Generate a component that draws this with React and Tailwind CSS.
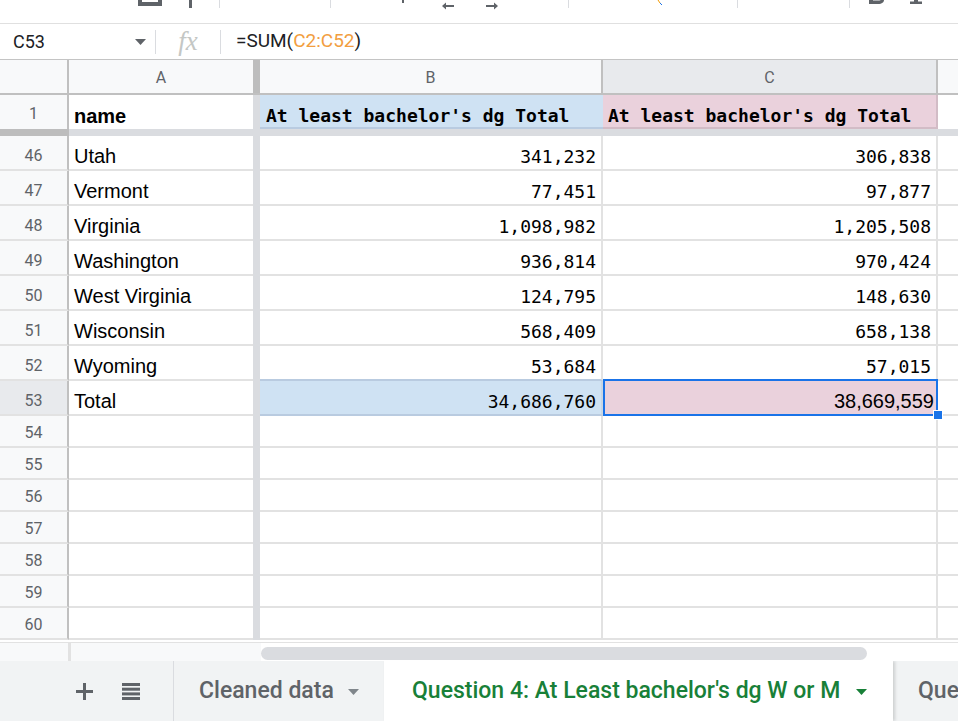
import React from 'react';

const rows = [
  [46, 'Utah', '341,232', '306,838'],
  [47, 'Vermont', '77,451', '97,877'],
  [48, 'Virginia', '1,098,982', '1,205,508'],
  [49, 'Washington', '936,814', '970,424'],
  [50, 'West Virginia', '124,795', '148,630'],
  [51, 'Wisconsin', '568,409', '658,138'],
  [52, 'Wyoming', '53,684', '57,015'],
];

const emptyRows = [54, 55, 56, 57, 58, 59, 60];

const sans = "font-['Liberation_Sans',Arial,sans-serif]";
const mono = "font-['DejaVu_Sans_Mono',monospace]";
const ui = "font-['Roboto',Arial,sans-serif]";

const Caret = ({ className = 'fill-[#5f6368]' }) => (
  <svg width="11" height="6" viewBox="0 0 11 6" className={className}>
    <path d="M0 0h11L5.5 6z" />
  </svg>
);

const Toolbar = () => (
  <div className="flex h-[23px] items-start bg-white">
    <svg width="24" height="8" viewBox="0 0 24 8" className="ml-[138px]">
      <path d="M0 0h4v2h16V0h4v6H0z" fill="#5f6368" />
    </svg>
    <div className="ml-[27px] h-[8px] w-[3px] bg-[#5f6368]" />
    <div className="ml-[27px] h-[8px] w-px bg-[#dadce0]" />
    <div className="ml-[110px] h-[8px] w-px bg-[#dadce0]" />
    <div className="ml-[71px] h-[3px] w-[2px] bg-[#5f6368]" />
    <svg width="12" height="8" viewBox="0 0 12 8" className="ml-[38px] mt-[2px]">
      <path d="M0 4l4-3.5v2.5h8v2H4v2.5z" fill="#5f6368" />
    </svg>
    <svg width="12" height="8" viewBox="0 0 12 8" className="ml-[32px] mt-[2px]">
      <path d="M12 4L8 .5V3H0v2h8v2.5z" fill="#5f6368" />
    </svg>
    <div className="ml-[70px] h-[8px] w-px bg-[#dadce0]" />
    <svg width="6" height="5" viewBox="0 0 6 5" className="ml-[88px]">
      <path d="M1 0l2 3" stroke="#f29900" strokeWidth="1" />
      <path d="M3 3l2 2" stroke="#1a73e8" strokeWidth="1" />
    </svg>
    <div className="ml-[74px] h-[8px] w-px bg-[#dadce0]" />
    <div className="ml-[111px] h-[8px] w-px bg-[#dadce0]" />
    <svg width="15" height="4" viewBox="0 0 15 4" className="ml-[19px]">
      <path d="M0 0h4v0.5h5C11 0.5 12 0 12 0h3c0 2-2 4-6 4H0z" fill="#5f6368" />
    </svg>
    <svg width="12" height="4" viewBox="0 0 12 4" className="ml-[26px]">
      <path d="M4 0h4v1.5h4V4H0V1.5h4z" fill="#5f6368" />
    </svg>
  </div>
);

const FormulaBar = () => (
  <div className={`flex h-[37px] items-center border-y border-t-[#e0e0e0] border-b-[#c4c4c4] bg-white ${ui}`}>
    <div className="flex w-[155px] items-center pl-[13px] pr-[9px]">
      <span className="text-[18px] text-[#202124]">C53</span>
      <span className="ml-auto">
        <Caret />
      </span>
    </div>
    <div className="h-[24px] w-px bg-[#dadce0]" />
    <div className="flex w-[64px] justify-center">
      <span className="font-['Liberation_Serif',serif] text-[27px] italic leading-none text-[#c4c7c5]">fx</span>
    </div>
    <div className="h-[24px] w-px bg-[#dadce0]" />
    <div className="pl-[15px] text-[19px] text-[#202124]">
      =SUM(<span className="text-[#f29e3f]">C2:C52</span>)
    </div>
  </div>
);

const HeaderRow = () => (
  <div className={`flex h-[35px] border-b-2 border-[#c0c0c0] text-[16px] text-[#5f6368] ${ui}`}>
    <div className="w-[69px] border-r-2 border-[#c0c0c0] bg-[#f8f9fa]" />
    <div className="flex w-[184px] items-center justify-center bg-[#f8f9fa] pt-[2px]">A</div>
    <div className="w-[7px] bg-[#bdbdbd]" />
    <div className="flex w-[343px] items-center justify-center border-r-2 border-[#c0c0c0] bg-[#f8f9fa] pt-[2px]">B</div>
    <div className="flex w-[335px] items-center justify-center border-r-2 border-[#c0c0c0] bg-[#e8eaed] pt-[2px]">C</div>
    <div className="flex-1 bg-[#f8f9fa]" />
  </div>
);

const FirstRow = () => (
  <>
    <div className="flex h-[34px]">
      <div className={`flex w-[69px] items-center justify-center border-r-2 border-[#c0c0c0] bg-[#f8f9fa] pt-[4px] text-[16px] text-[#5f6368] ${ui}`}>
        1
      </div>
      <div className={`flex w-[184px] items-center pt-[7px] pl-[5px] text-[20px] font-bold text-black ${sans}`}>name</div>
      <div className="w-[7px] bg-[#dadce0]" />
      <div className={`flex w-[343px] items-center border-b-2 border-[#b9cbe0] bg-[#cfe2f3] pt-[8px] pl-[6px] text-[18px] font-bold text-black ${mono}`}>
        At least bachelor's dg Total
      </div>
      <div className={`flex w-[335px] items-center border-b-2 border-r-2 border-[#d2bcc6] bg-[#ead1dc] pt-[8px] pl-[5px] text-[18px] font-bold text-black ${mono}`}>
        At least bachelor's dg Total
      </div>
      <div className="flex-1 bg-white" />
    </div>
    <div className="flex h-[7px]">
      <div className="w-[69px] bg-[#bdbdbd]" />
      <div className="flex-1 bg-[#dadce0]" />
    </div>
  </>
);

const RowHead = ({ n, h, pt, active }) => (
  <div
    className={`flex w-[69px] shrink-0 items-center justify-center border-b-2 border-r-2 border-b-[#e2e2e2] border-r-[#c0c0c0] text-[16px] text-[#5f6368] ${ui} ${
      active ? 'bg-[#e8eaed]' : 'bg-[#f8f9fa]'
    } ${h} ${pt}`}
  >
    {n}
  </div>
);

const DataRow = ({ n, name, b, c, last }) => (
  <div className="flex h-[35px]">
    <RowHead n={n} h="h-[35px]" pt="pt-[6px]" />
    <div className={`flex w-[184px] items-center border-b-2 border-[#e2e2e2] pt-[7px] pl-[5px] text-[20px] text-black ${sans}`}>
      {name}
    </div>
    <div className="w-[7px] bg-[#dadce0]" />
    <div
      className={`flex w-[343px] items-center justify-end border-b-2 border-r-2 border-r-[#e2e2e2] pt-[7px] pr-[5px] text-[18px] text-black ${mono} ${
        last ? 'border-b-[#b9cbe0]' : 'border-b-[#e2e2e2]'
      }`}
    >
      {b}
    </div>
    <div className={`flex w-[335px] items-center justify-end border-b-2 border-r-2 border-[#e2e2e2] pt-[7px] pr-[5px] text-[18px] text-black ${mono}`}>
      {c}
    </div>
    <div className="flex-1 border-b-2 border-[#e2e2e2] bg-white" />
  </div>
);

const TotalRow = () => (
  <div className="flex h-[35px]">
    <RowHead n={53} h="h-[35px]" pt="pt-[6px]" active />
    <div className={`flex w-[184px] items-center border-b-2 border-[#e2e2e2] pt-[7px] pl-[5px] text-[20px] text-black ${sans}`}>
      Total
    </div>
    <div className="w-[7px] bg-[#dadce0]" />
    <div className={`flex w-[343px] items-center justify-end border-b-2 border-b-[#b9cbe0] border-r-2 border-r-[#c9d6e3] bg-[#cfe2f3] pt-[7px] pr-[5px] text-[18px] text-black ${mono}`}>
      34,686,760
    </div>
    <div className="relative -mt-[2px] flex h-[37px] w-[335px]">
      <div className={`flex flex-1 items-center justify-end border-2 border-[#1a73e8] bg-[#ead1dc] pt-[7px] pr-[2px] text-[20px] text-black ${sans}`}>
        38,669,559
      </div>
      <div className="absolute -bottom-[4px] -right-[5px] h-[10px] w-[10px] border border-white bg-[#1a73e8]" />
    </div>
    <div className="flex-1 border-b-2 border-[#e2e2e2] bg-white" />
  </div>
);

const EmptyRow = ({ n }) => (
  <div className="flex h-[32px]">
    <RowHead n={n} h="h-[32px]" pt="pt-[3px]" />
    <div className="w-[184px] border-b-2 border-[#e2e2e2]" />
    <div className="w-[7px] bg-[#dadce0]" />
    <div className="w-[343px] border-b-2 border-r-2 border-[#e2e2e2]" />
    <div className="w-[335px] border-b-2 border-r-2 border-[#e2e2e2]" />
    <div className="flex-1 border-b-2 border-[#e2e2e2]" />
  </div>
);

const ScrollArea = () => (
  <div className="h-[21px] bg-white pt-[2px]">
    <div className="flex h-[19px] border-t border-[#e2e2e2]">
      <div className="flex w-[261px] bg-[#f8f9fa]">
        <div className="ml-[68px] w-[3px] bg-[#e2e2e2]" />
      </div>
      <div className="flex flex-1 items-end">
        <div className="mb-[1px] h-[13px] w-[606px] rounded-full bg-[#dadce0]" />
      </div>
    </div>
  </div>
);

const TabBar = () => (
  <div className={`flex h-[60px] overflow-hidden bg-[#f1f3f4] ${ui}`}>
    <div className="flex shrink-0 items-center pl-[76px]">
      <svg width="17" height="17" viewBox="0 0 17 17" fill="#5f6368">
        <path d="M7 0h3v7h7v3h-7v7H7v-7H0V7h7z" />
      </svg>
    </div>
    <div className="ml-[29px] flex shrink-0 items-center">
      <svg width="18" height="17" viewBox="0 0 18 17" fill="#5f6368">
        <rect x="0" y="0" width="18" height="3" />
        <rect x="0" y="4.7" width="18" height="3" />
        <rect x="0" y="9.4" width="18" height="3" />
        <rect x="0" y="14" width="18" height="3" />
      </svg>
    </div>
    <div className="ml-[33px] w-px shrink-0 bg-[#dadce0]" />
    <div className="flex w-[210px] shrink-0 items-center pl-[25px] pr-[25px] text-[23px] font-medium text-[#5f6368]">
      <span className="whitespace-nowrap">Cleaned data</span>
      <span className="ml-auto mt-[1px]">
        <Caret className="fill-[#80868b]" />
      </span>
    </div>
    <div className="flex w-[509px] shrink-0 items-center bg-white pl-[28px] pr-[26px] text-[23px] font-medium text-[#188038] shadow-[2px_0_3px_rgba(60,64,67,0.2)]">
      <span className="whitespace-nowrap">Question 4: At Least bachelor's dg W or M</span>
      <span className="ml-auto mt-[1px]">
        <Caret className="fill-[#188038]" />
      </span>
    </div>
    <div className="flex shrink-0 items-center whitespace-nowrap pl-[25px] text-[23px] font-medium text-[#5f6368]">
      Que
    </div>
  </div>
);

export default function App() {
  return (
    <div className="h-[721px] w-[958px] overflow-hidden bg-white">
      <Toolbar />
      <FormulaBar />
      <HeaderRow />
      <FirstRow />
      {rows.map(([n, name, b, c], i) => (
        <DataRow key={n} n={n} name={name} b={b} c={c} last={i === rows.length - 1} />
      ))}
      <TotalRow />
      {emptyRows.map((n) => (
        <EmptyRow key={n} n={n} />
      ))}
      <ScrollArea />
      <TabBar />
    </div>
  );
}
